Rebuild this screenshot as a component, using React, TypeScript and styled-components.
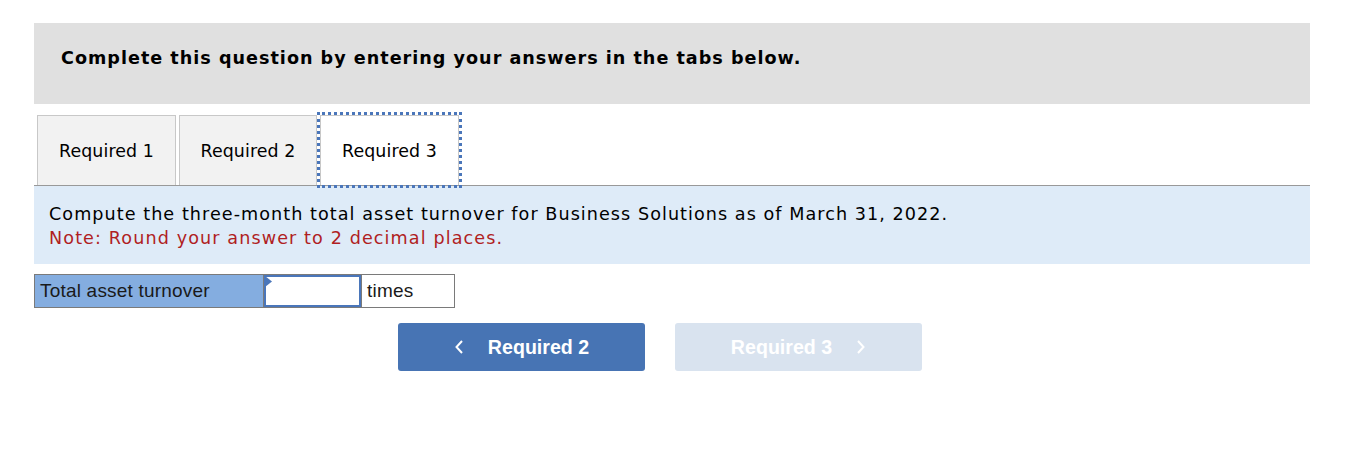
import React from "react";
import styled, { createGlobalStyle } from "styled-components";

const Global = createGlobalStyle`
  html, body { margin: 0; padding: 0; background: #ffffff; }
  body { font-family: "DejaVu Sans", Verdana, sans-serif; color: #000; }
`;

const Page = styled.div`
  width: 1276px;
  padding: 23px 0 0 34px;
`;

const Header = styled.div`
  background: #e0e0e0;
  height: 81px;
  box-sizing: border-box;
  padding: 25px 0 0 27px;
  font-weight: bold;
  font-size: 17.6px;
  letter-spacing: 1px;
`;

const TabBar = styled.div`
  display: flex;
  align-items: flex-end;
  margin-top: 11px;
  padding-left: 3px;
  gap: 3px;
  border-bottom: 1px solid #999999;
  height: 70px;
`;

const Tab = styled.div<{ $active?: boolean; $w: number }>`
  box-sizing: border-box;
  height: 70px;
  width: ${(p) => p.$w}px;
  display: flex;
  align-items: center;
  justify-content: center;
  font-size: 17.4px;
  letter-spacing: 0.1px;
  background: ${(p) => (p.$active ? "#ffffff" : "#f2f2f2")};
  border: 1px solid #c8c8c8;
  border-bottom: none;
  outline: ${(p) => (p.$active ? "3px dotted #4a76ba" : "none")};
  outline-offset: 0;
`;

const Info = styled.div`
  background: #deebf8;
  height: 78px;
  box-sizing: border-box;
  padding: 16px 0 0 15px;
  font-size: 17.6px;
  line-height: 24px;
  letter-spacing: 1.05px;
`;

const Note = styled.div`
  color: #b01e23;
  letter-spacing: 1.1px;
`;

const Row = styled.div`
  display: flex;
  margin-top: 10px;
  height: 34px;
  font-family: "Liberation Sans", Arial, sans-serif;
  font-size: 19px;
  letter-spacing: 0.2px;
`;

const LabelCell = styled.div`
  box-sizing: border-box;
  width: 229px;
  background: #84ade0;
  border: 1px solid #7a7a7a;
  border-right: none;
  padding: 0 0 0 5px;
  display: flex;
  align-items: center;
  color: #1a1a1a;
`;

const InputCell = styled.div`
  box-sizing: border-box;
  width: 99px;
  border: 1px solid #7a7a7a;
  position: relative;
  display: flex;
`;

const Input = styled.input`
  box-sizing: border-box;
  width: 100%;
  height: 100%;
  border: 2px solid #4a76ba;
  margin: 0;
  outline: none;
  font-size: 16px;
`;

const Marker = styled.div`
  position: absolute;
  top: 1px;
  left: 1px;
  width: 7px;
  height: 11px;
  background: #4a76ba;
  clip-path: polygon(0 0, 100% 50%, 0 100%);
`;

const UnitCell = styled.div`
  box-sizing: border-box;
  width: 93px;
  border: 1px solid #7a7a7a;
  border-left: none;
  display: flex;
  align-items: center;
  padding-left: 5px;
  color: #1a1a1a;
`;

const Nav = styled.div`
  display: flex;
  gap: 30px;
  margin-top: 15px;
  padding-left: 364px;
`;

const NavButton = styled.button<{ $disabled?: boolean }>`
  box-sizing: border-box;
  width: 247px;
  height: 48px;
  border: none;
  border-radius: 3px;
  background: ${(p) => (p.$disabled ? "#d9e3ef" : "#4774b4")};
  color: #ffffff;
  font-family: "Liberation Sans", Arial, sans-serif;
  font-weight: bold;
  font-size: 19.6px;
  display: flex;
  align-items: center;
  justify-content: center;
  gap: 24px;
  padding: 0;
  cursor: pointer;
`;

const Chevron = ({ dir }: { dir: "left" | "right" }) => (
  <svg width="10" height="16" viewBox="0 0 10 16">
    <path
      d={dir === "left" ? "M8 2 L2.5 8 L8 14" : "M2 2 L7.5 8 L2 14"}
      fill="none"
      stroke="#ffffff"
      strokeWidth="2"
    />
  </svg>
);

export default function App() {
  return (
    <>
      <Global />
      <Page>
        <Header>Complete this question by entering your answers in the tabs below.</Header>
        <TabBar>
          <Tab $w={139}>Required 1</Tab>
          <Tab $w={138}>Required 2</Tab>
          <Tab $w={139} $active>Required 3</Tab>
        </TabBar>
        <Info>
          <div>Compute the three-month total asset turnover for Business Solutions as of March 31, 2022.</div>
          <Note>Note: Round your answer to 2 decimal places.</Note>
        </Info>
        <Row>
          <LabelCell>Total asset turnover</LabelCell>
          <InputCell>
            <Input type="text" />
            <Marker />
          </InputCell>
          <UnitCell>times</UnitCell>
        </Row>
        <Nav>
          <NavButton>
            <Chevron dir="left" />
            <span>Required 2</span>
          </NavButton>
          <NavButton $disabled>
            <span>Required 3</span>
            <Chevron dir="right" />
          </NavButton>
        </Nav>
      </Page>
    </>
  );
}
